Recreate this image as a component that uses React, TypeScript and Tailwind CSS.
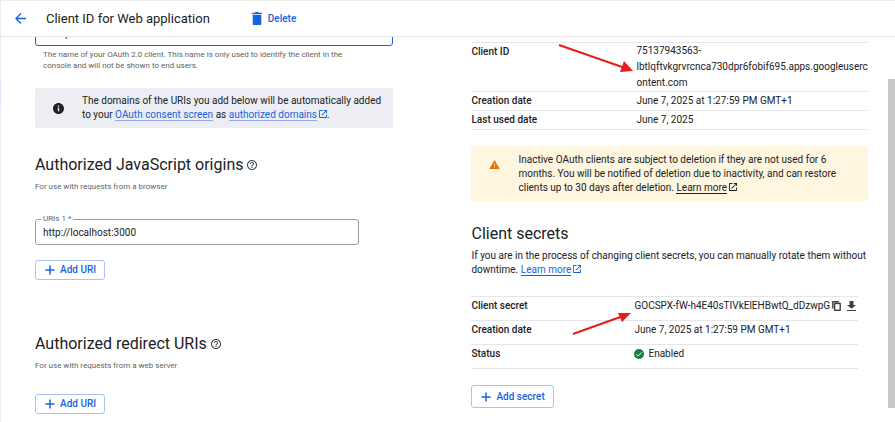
import type { ReactNode } from "react"

function ExternalIcon() {
  return (
    <svg className="inline-block w-2 h-2 ml-0.5 -mt-0.5" viewBox="0 0 18 18" fill="currentColor" aria-hidden="true">
      <path d="M2 0h6v2H2v14h14v-6h2v6a2 2 0 0 1-2 2H2a2 2 0 0 1-2-2V2a2 2 0 0 1 2-2zm9 0h7v7h-2V3.400L6.700 12.700 5.300 11.300 14.600 2H11z" />
    </svg>
  )
}

function HelpIcon() {
  return (
    <svg className="w-2.5 h-2.5 text-[#3c4043]" viewBox="2 2 20 20" fill="currentColor" aria-hidden="true">
      <path d="M11 18h2v-2h-2v2zm1-16C6.480 2 2 6.480 2 12s4.480 10 10 10 10-4.480 10-10S17.520 2 12 2zm0 18c-4.410 0-8-3.590-8-8s3.590-8 8-8 8 3.590 8 8-3.590 8-8 8zm0-14c-2.210 0-4 1.790-4 4h2c0-1.100.9-2 2-2s2 .9 2 2c0 2-3 1.750-3 5h2c0-2.250 3-2.500 3-5 0-2.210-1.790-4-4-4z" />
    </svg>
  )
}

function OutlineButton({ children }: { children: ReactNode }) {
  return (
    <button className="flex items-center gap-1 min-h-5 px-2 rounded-[3px] border border-[#a8c3f3] text-[#1763dc] font-medium text-[10px]">
      <svg className="w-3 h-3" viewBox="0 0 12 12" fill="none" stroke="currentColor" strokeWidth="1.500" aria-hidden="true">
        <path d="M6 1.500v9M1.500 6h9" />
      </svg>
      {children}
    </button>
  )
}

function SectionTitle({ title, note }: { title: string; note: string }) {
  return (
    <>
      <h2 className="flex items-center gap-1 text-base leading-5">
        {title}
        <HelpIcon />
      </h2>
      <p className="mt-1.5 text-[8px] leading-3 text-[#5f6368]">{note}</p>
    </>
  )
}

export default function App() {
  return (
    <div className="relative flex flex-col min-h-screen bg-white border-t border-l border-[#ededee] font-['Roboto','Liberation_Sans',sans-serif] text-[#202124] text-[10px] leading-[14px]">
      {/* Selected item of the collapsed side nav */}
      <div className="absolute top-[82px] -left-px w-px h-6 bg-[#d9e5fb]" />

      {/* Top bar */}
      <header className="flex items-center h-9 pl-3.5 border-b border-[#e4e6ea]">
        <button aria-label="Back" className="text-[#1763dc]">
          <svg className="w-[11px] h-[11px]" viewBox="4 4 16 16" fill="currentColor">
            <path d="M20 11H7.830l5.590-5.590L12 4l-8 8 8 8 1.410-1.410L7.830 13H20v-2z" />
          </svg>
        </button>
        <h1 className="ml-5 text-[13px] leading-5">Client ID for Web application</h1>
        <button className="flex items-center gap-1.5 ml-[42px] text-[#1763dc] font-medium">
          <svg className="w-2.5 h-[13px]" viewBox="0 0 10 13" fill="currentColor" aria-hidden="true">
            <path d="M0 .7h3L3.600 0h2.800L7 .7h3V2H0zM.7 2.700h8.600V12a1 1 0 0 1-1 1H1.700a1 1 0 0 1-1-1z" />
          </svg>
          Delete
        </button>
      </header>

      <div className="flex flex-1">
        <main className="flex-1 grid grid-cols-[358fr_396fr] gap-x-[78px] pl-[34px] pr-5 overflow-hidden">
          {/* Left column */}
          <div>
            <input
              aria-label="Name"
              defaultValue="Web p"
              className="block w-full h-[26px] -mt-[17px] px-[7px] rounded-[3px] border border-[#1763dc] outline-none"
            />
            <p className="mt-[3px] mb-[17px] ml-2 text-[8px] leading-[11px] text-[#5f6368]">
              The name of your OAuth 2.0 client. This name is only used to identify the client in the
              <br />
              console and will not be shown to end users.
            </p>

            <div className="flex items-center h-10 pl-[18px] rounded-[3px] bg-[#edeef3]">
              <svg className="w-[11px] h-[11px] shrink-0" viewBox="2 2 20 20" fill="currentColor" aria-hidden="true">
                <path d="M12 2C6.480 2 2 6.480 2 12s4.480 10 10 10 10-4.480 10-10S17.520 2 12 2zm1.300 15h-2.600v-6.500h2.600V17zm0-8h-2.600V6.500h2.600V9z" />
              </svg>
              <p className="ml-[18px]">
                The domains of the URIs you add below will be automatically added
                <br />
                to your{" "}
                <a href="#consent" className="text-[#1763dc] border-b border-[#8fa8ee]">OAuth consent screen</a> as{" "}
                <a href="#domains" className="text-[#1763dc]">
                  <span className="border-b border-[#8fa8ee]">authorized domains</span>
                  <ExternalIcon />
                </a>
                .
              </p>
            </div>

            <section className="mt-[27px]">
              <SectionTitle title="Authorized JavaScript origins" note="For use with requests from a browser" />
              <div className="relative mt-[26px] mr-[34px]">
                <label htmlFor="uri" className="absolute -top-[7px] left-1.5 px-0.5 bg-white text-[8px] text-[#5f6368]">
                  URIs 1 *
                </label>
                <input
                  id="uri"
                  defaultValue="http://localhost:3000"
                  className="block w-full h-[26px] px-[7px] rounded-[3px] border border-[#9a9c9f] outline-none"
                />
              </div>
              <div className="flex mt-[15px]">
                <OutlineButton>Add URI</OutlineButton>
              </div>
            </section>

            <section className="mt-[54px]">
              <SectionTitle title="Authorized redirect URIs" note="For use with requests from a web server" />
              <div className="flex mt-[22px]">
                <OutlineButton>Add URI</OutlineButton>
              </div>
            </section>
          </div>

          {/* Right column */}
          <div className="pt-[5px]">
            <div className="relative">
              <table className="w-full text-left border-t border-[#e4e6ea]">
                <tbody className="align-top">
                  <tr className="border-b border-[#e4e6ea]">
                    <th className="w-[165px] pt-0.5 font-medium">Client ID</th>
                    <td className="leading-4">
                      75137943563-
                      <br />
                      lbtlqftvkgrvrcnca730dpr6fobif695.apps.googleuserc
                      <br />
                      ontent.com
                    </td>
                  </tr>
                  <tr className="border-b border-[#e4e6ea]">
                    <th className="py-0.5 font-medium">Creation date</th>
                    <td className="py-0.5">June 7, 2025 at 1:27:59 PM GMT+1</td>
                  </tr>
                  <tr className="border-b border-[#e4e6ea]">
                    <th className="py-0.5 font-medium">Last used date</th>
                    <td className="py-0.5">June 7, 2025</td>
                  </tr>
                </tbody>
              </table>
              <svg className="absolute top-0.5 left-[87px] w-[76px] h-[30px]" viewBox="0 0 76 30" aria-hidden="true">
                <path d="M1 1l66 23" stroke="#e81c1c" strokeWidth="2" />
                <path d="M75 27l-13 1 4-11z" fill="#e81c1c" />
              </svg>
            </div>

            <div className="flex mt-4 pt-[7px] pb-1.5 pl-[18px] rounded-[3px] bg-[#fef6df]">
              <svg className="w-[11px] h-[9px] mt-[7px] shrink-0" viewBox="1 2 22 19" fill="#e8710a" aria-hidden="true">
                <path d="M1 21h22L12 2 1 21zm12-3h-2v-2h2v2zm0-4h-2v-4h2v4z" />
              </svg>
              <p className="ml-[18px]">
                Inactive OAuth clients are subject to deletion if they are not used for 6
                <br />
                months. You will be notified of deletion due to inactivity, and can restore
                <br />
                clients up to 30 days after deletion.{" "}
                <a href="#inactive">
                  <span className="border-b border-[#202124]">Learn more</span>
                  <ExternalIcon />
                </a>
              </p>
            </div>

            <section className="mt-[23px]">
              <h2 className="text-base leading-5">Client secrets</h2>
              <p className="mt-[5px]">
                If you are in the process of changing client secrets, you can manually rotate them without
                <br />
                downtime.{" "}
                <a href="#rotate" className="text-[#1763dc]">
                  <span className="border-b border-[#1763dc]">Learn more</span>
                  <ExternalIcon />
                </a>
              </p>

              <div className="relative mt-[19px] mr-2.5">
                <table className="w-full text-left border-t border-[#e4e6ea]">
                  <tbody className="align-top">
                    <tr className="border-b border-[#e4e6ea]">
                      <th className="w-[163px] pt-0.5 pb-[7px] font-medium">Client secret</th>
                      <td className="pt-0.5">
                        <div className="flex items-center whitespace-nowrap">
                          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
                          <button aria-label="Copy" className="ml-0.5 text-[#3c4043]">
                            <svg className="w-[9px] h-2.5" viewBox="2 1 19 22" fill="currentColor" stroke="currentColor" strokeWidth=".8">
                              <path d="M16 1H4c-1.100 0-2 .9-2 2v14h2.500V3.500H16V1zm3 4H8c-1.100 0-2 .9-2 2v14c0 1.100.9 2 2 2h11c1.100 0 2-.9 2-2V7c0-1.100-.9-2-2-2zm-.5 15.500h-10v-13h10v13z" />
                            </svg>
                          </button>
                          <button aria-label="Download" className="ml-1.5 text-[#3c4043]">
                            <svg className="w-[9px] h-2.5" viewBox="4 3 16 18" fill="currentColor">
                              <path d="M20 10h-4.500V3h-7v7H4l8 7 8-7zM4 19v2h16v-2H4z" />
                            </svg>
                          </button>
                        </div>
                      </td>
                    </tr>
                    <tr className="border-b border-[#e4e6ea]">
                      <th className="pt-0.5 pb-[7px] font-medium">Creation date</th>
                      <td className="pt-0.5">June 7, 2025 at 1:27:59 PM GMT+1</td>
                    </tr>
                    <tr className="border-b border-[#e4e6ea]">
                      <th className="pt-0.5 pb-[7px] font-medium">Status</th>
                      <td className="pt-0.5">
                        <div className="flex items-center gap-1">
                          <svg className="w-2.5 h-2.5" viewBox="0 0 20 20" aria-hidden="true">
                            <circle cx="10" cy="10" r="10" fill="#188038" />
                            <path d="M5 10.500l3.500 3.500L15.500 7" fill="none" stroke="#fff" strokeWidth="2" />
                          </svg>
                          Enabled
                        </div>
                      </td>
                    </tr>
                  </tbody>
                </table>
                <svg className="absolute top-4 left-[101px] w-[60px] h-6" viewBox="0 0 60 24" aria-hidden="true">
                  <path d="M1 22l50-18" stroke="#e81c1c" strokeWidth="2" />
                  <path d="M59 1l-9 9-4-9z" fill="#e81c1c" />
                </svg>
              </div>

              <div className="flex mt-4 h-[23px]">
                <OutlineButton>Add secret</OutlineButton>
              </div>
            </section>
          </div>
        </main>

        {/* Scrollbar */}
        <div className="w-[7px] pt-[42px] pb-3.5 flex">
          <div className="flex-1 bg-[#c8c8c8]" />
        </div>
      </div>
    </div>
  )
}
